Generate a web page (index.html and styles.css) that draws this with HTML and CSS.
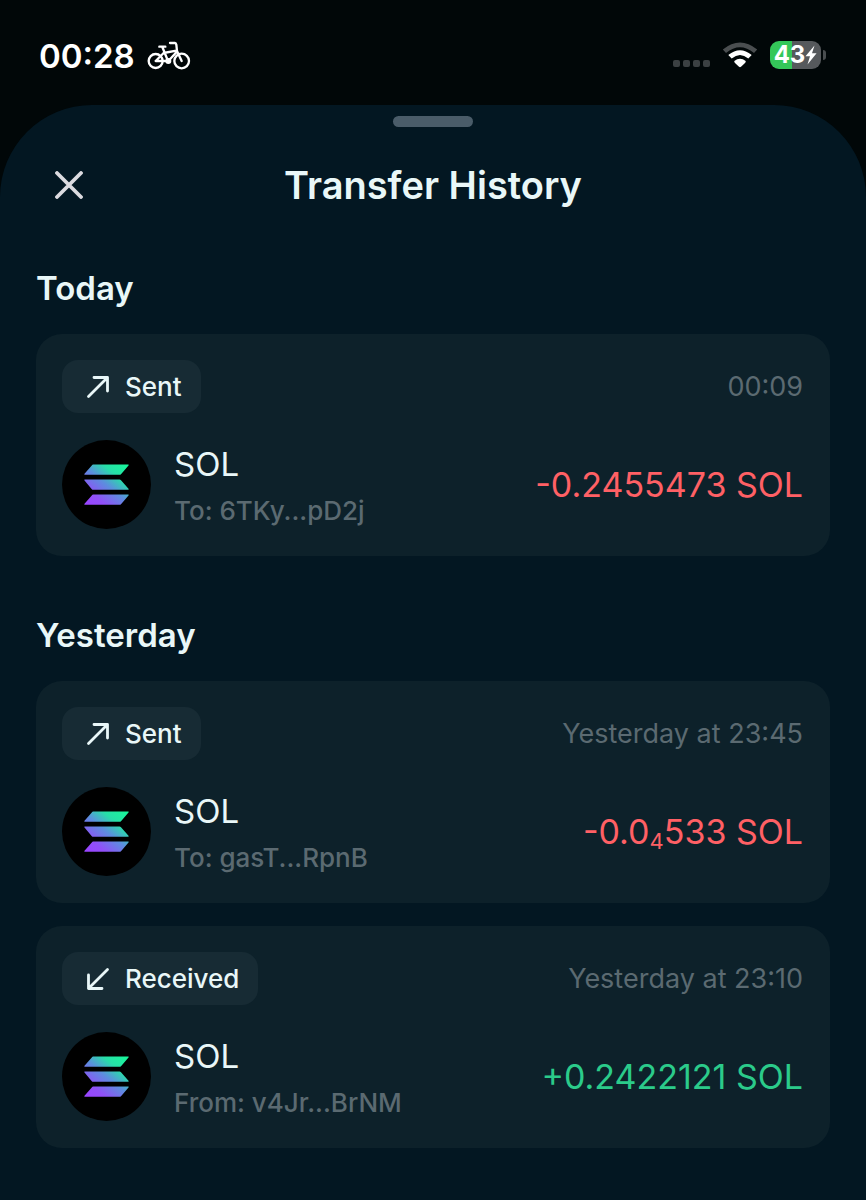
FILE: index.html
```html
<!DOCTYPE html>
<html lang="en">
<head>
  <meta charset="UTF-8">
  <meta name="viewport" content="width=device-width, initial-scale=1.0">
  <title>Transfer History</title>
  <link rel="stylesheet" href="styles.css">
</head>
<body>
  <!-- Shared icons -->
  <svg class="sprite" aria-hidden="true">
    <defs>
      <linearGradient id="sol-gradient" gradientUnits="userSpaceOnUse" x1="28" y1="66" x2="62" y2="24">
        <stop offset="0" stop-color="#9945ff"/>
        <stop offset="0.2" stop-color="#9050f8"/>
        <stop offset="0.5" stop-color="#5c8ede"/>
        <stop offset="0.75" stop-color="#27dfa8"/>
        <stop offset="1" stop-color="#19f59b"/>
      </linearGradient>
    </defs>
    <symbol id="sol" viewBox="0 0 89 89">
      <circle cx="44.500" cy="44.500" r="44.500" fill="#000"/>
      <g fill="url(#sol-gradient)">
        <path d="M31 24.600H66q1.400 0 .5 1L59 34.200q-.6.600-1.500.600H23q-1.400 0-.5-1L30 25.200q.5-.6 1-.6z"/>
        <path d="M23 39.600H57.500q.9 0 1.500.6l7.500 8.600q.9 1-.5 1H31q-.6 0-1.200-.6L22.500 40.600q-.9-1 .5-1z"/>
        <path d="M31 54.600H66q1.400 0 .5 1L59 64.200q-.6.600-1.500.600H23q-1.400 0-.5-1L30 55.200q.5-.6 1-.6z"/>
      </g>
    </symbol>
    <symbol id="arrow-out" viewBox="0 0 24 24">
      <path d="M2.500 21.500L21.500 2.500M8 2.500H21.500V16" fill="none" stroke="currentColor" stroke-width="2.800" stroke-linecap="round" stroke-linejoin="round"/>
    </symbol>
    <symbol id="arrow-in" viewBox="0 0 24 24">
      <path d="M21.500 2.500L2.500 21.500M2.500 8V21.500H16" fill="none" stroke="currentColor" stroke-width="2.800" stroke-linecap="round" stroke-linejoin="round"/>
    </symbol>
  </svg>

  <div class="status-bar">
    <div class="status-left">
      <span class="clock">00:28</span>
      <svg class="bike" viewBox="0 0 132 90" aria-hidden="true">
        <g fill="none" stroke="#fff" stroke-width="7" stroke-linecap="round" stroke-linejoin="round">
          <circle cx="26" cy="60" r="21"/>
          <circle cx="104" cy="60" r="22"/>
          <path d="M37 17H55M46 18L63 60M26 60H63M26 60L50 36M50 36L88 29M64 60L89 33M69 6H84Q87 6 88 11L90 30L104 60"/>
        </g>
        <circle cx="64" cy="60" r="9" fill="#fff"/>
      </svg>
    </div>
    <div class="status-right">
      <span class="cell-dots"><i></i><i></i><i></i><i></i></span>
      <svg class="wifi" viewBox="0 0 36 28" aria-hidden="true">
        <path d="M0.800 8.500Q18-5.500 35.200 8.500L32 12Q18 0.500 4 12z" fill="#4a4e50"/>
        <path d="M6.300 14Q18 4.500 29.700 14L26.300 17.500Q18 10.500 9.700 17.500z" fill="#fff"/>
        <path d="M12.300 20Q18 15.500 23.700 20Q24 21 23 22L19 25.800Q18 26.600 17 25.800L13 22Q12 21 12.300 20z" fill="#fff"/>
      </svg>
      <span class="battery">
        <span class="battery-body">43<svg class="bolt" viewBox="0 0 12 20" aria-hidden="true"><path d="M9.500 0.500L0.500 11.300H5L2.500 19.500L11.600 8.300H7z" fill="#fff"/></svg></span>
        <span class="battery-tip"></span>
      </span>
    </div>
  </div>

  <main class="sheet">
    <div class="handle"></div>
    <header class="sheet-header">
      <button class="close" type="button" aria-label="Close">
        <svg viewBox="0 0 28 28" aria-hidden="true"><path d="M2 2L26 26M26 2L2 26" stroke="currentColor" stroke-width="3.800" stroke-linecap="round"/></svg>
      </button>
      <h1>Transfer History</h1>
    </header>

    <section class="day">
      <h2>Today</h2>
      <article class="card">
        <div class="card-top">
          <span class="badge"><svg><use href="#arrow-out"/></svg>Sent</span>
          <time>00:09</time>
        </div>
        <div class="card-main">
          <svg class="coin"><use href="#sol"/></svg>
          <div class="info">
            <span class="token">SOL</span>
            <span class="address">To: 6TKy...pD2j</span>
          </div>
          <span class="amount sent">-0.2455473 SOL</span>
        </div>
      </article>
    </section>

    <section class="day">
      <h2>Yesterday</h2>
      <article class="card">
        <div class="card-top">
          <span class="badge"><svg><use href="#arrow-out"/></svg>Sent</span>
          <time>Yesterday at 23:45</time>
        </div>
        <div class="card-main">
          <svg class="coin"><use href="#sol"/></svg>
          <div class="info">
            <span class="token">SOL</span>
            <span class="address">To: gasT...RpnB</span>
          </div>
          <span class="amount sent">-0.0<sub>4</sub>533 SOL</span>
        </div>
      </article>
      <article class="card">
        <div class="card-top">
          <span class="badge"><svg><use href="#arrow-in"/></svg>Received</span>
          <time>Yesterday at 23:10</time>
        </div>
        <div class="card-main">
          <svg class="coin"><use href="#sol"/></svg>
          <div class="info">
            <span class="token">SOL</span>
            <span class="address">From: v4Jr...BrNM</span>
          </div>
          <span class="amount received">+0.2422121 SOL</span>
        </div>
      </article>
    </section>
  </main>
</body>
</html>
```
FILE: styles.css
```css
* {
  box-sizing: border-box;
}

body {
  margin: 0;
  min-height: 100vh;
  display: flex;
  flex-direction: column;
  background: #010708;
  color: #e9f7f8;
  font-family: Inter, "Liberation Sans", sans-serif;
}

.sprite {
  position: absolute;
  width: 0;
  height: 0;
}

/* Status bar */
.status-bar {
  display: flex;
  justify-content: space-between;
  align-items: center;
  height: 105px;
  padding: 6px 40px 0 39px;
  color: #fff;
}

.status-left,
.status-right {
  display: flex;
  align-items: center;
  height: 30px;
}

.status-left {
  gap: 12px;
}

.clock {
  font-size: 33px;
  font-weight: 600;
}

.bike {
  width: 44px;
  height: 30px;
}

.status-right {
  gap: 12px;
  margin-bottom: 2px;
}

.cell-dots {
  display: flex;
  gap: 3px;
  align-self: flex-end;
  margin-bottom: 3px;
}

.cell-dots i {
  width: 7px;
  height: 7px;
  border-radius: 2px;
  background: #3b4042;
}

.wifi {
  width: 36px;
  height: 28px;
}

.battery {
  display: flex;
  align-items: center;
  gap: 2px;
}

.battery-body {
  display: flex;
  align-items: center;
  justify-content: center;
  width: 51px;
  height: 28px;
  border-radius: 9px;
  background: linear-gradient(to right, #34c759 43%, #56595c 43%);
  font-size: 24px;
  font-weight: 700;
}

.bolt {
  flex: none;
  width: 12px;
  height: 20px;
}

.battery-tip {
  width: 3px;
  height: 10px;
  border-radius: 0 3px 3px 0;
  background: #4a4e50;
}

/* Sheet */
.sheet {
  flex: 1;
  padding: 11px 36px 52px;
  border-radius: 92px 92px 0 0;
  background: #031722;
}

.handle {
  width: 80px;
  height: 11px;
  margin: 0 auto;
  border-radius: 6px;
  background: #4a5c69;
}

.sheet-header {
  display: grid;
  grid-template-columns: 66px 1fr 66px;
  align-items: center;
  margin-top: 26px;
  height: 64px;
}

.close {
  display: flex;
  align-items: center;
  justify-content: center;
  width: 66px;
  height: 64px;
  padding: 0;
  border: none;
  background: none;
  color: #dcdbe0;
  cursor: pointer;
}

.close svg {
  width: 28px;
  height: 28px;
}

h1 {
  margin: 0;
  font-size: 38px;
  font-weight: 600;
  text-align: center;
}

.day {
  display: flex;
  flex-direction: column;
  gap: 23px;
  margin-top: 49px;
}

.day + .day {
  margin-top: 57px;
}

h2 {
  margin: 0;
  font-size: 33px;
  font-weight: 600;
  line-height: 45px;
}

/* Transfer cards */
.card {
  display: flex;
  flex-direction: column;
  gap: 27px;
  padding: 26px 27px 27px 26px;
  border-radius: 26px;
  background: #0d212a;
}

.card-top,
.card-main {
  display: flex;
  align-items: center;
}

.card-top {
  justify-content: space-between;
}

.badge {
  display: flex;
  align-items: center;
  gap: 15px;
  height: 53px;
  padding: 0 19px 0 24px;
  border-radius: 16px;
  background: #172b34;
  font-size: 26px;
  font-weight: 500;
}

.badge svg {
  width: 24px;
  height: 24px;
}

time,
.address {
  color: #5b6a71;
}

time {
  font-size: 27px;
}

.coin {
  width: 89px;
  height: 89px;
  flex: none;
}

.info {
  display: flex;
  flex-direction: column;
  gap: 9px;
  margin-left: 23px;
  padding-top: 6px;
  line-height: 37px;
}

.token {
  font-size: 33px;
}

.address {
  font-size: 26px;
  font-weight: 500;
}

.amount {
  margin-left: auto;
  font-size: 34px;
}

.amount sub {
  font-size: 22px;
  line-height: 0;
  vertical-align: -5px;
}

.sent {
  color: #ff6065;
}

.received {
  color: #2bcb8a;
}
```
